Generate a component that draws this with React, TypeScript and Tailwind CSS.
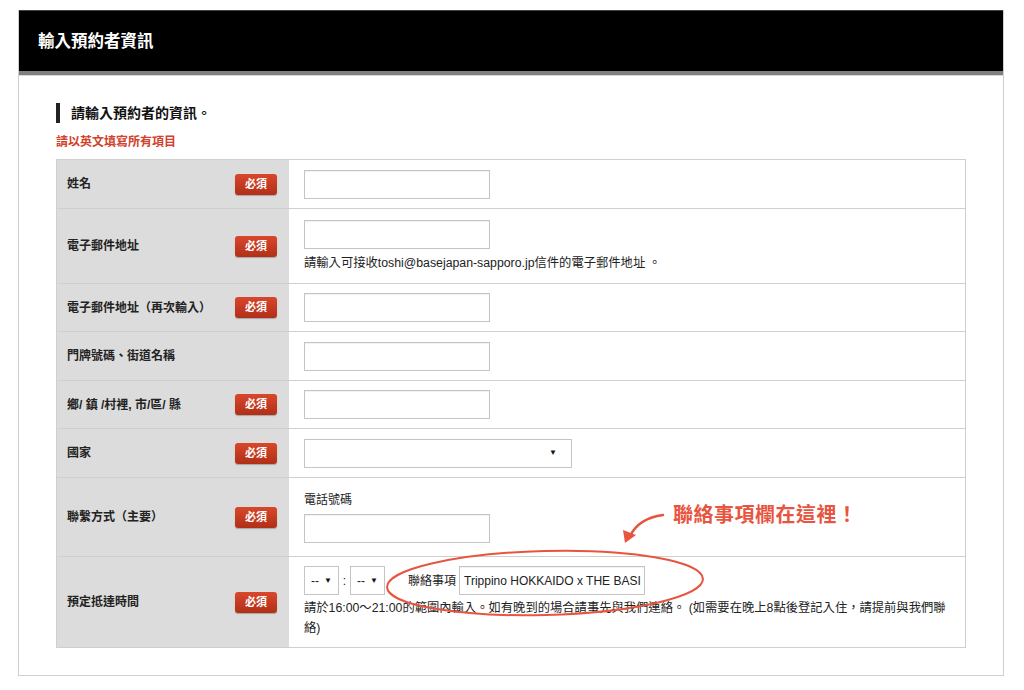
import type { ReactNode } from "react";

const font = { fontFamily: '"Liberation Sans", "Noto Sans CJK TC", sans-serif' };

function Badge() {
    return (
        <span className="flex h-[21px] w-[42px] shrink-0 items-center justify-center rounded-[3px] bg-gradient-to-b from-[#d9472b] to-[#b12f18] text-[11px] font-bold text-white shadow-[0_1px_1px_rgba(0,0,0,0.25)]">
            必須
        </span>
    );
}

function TextBox({ value = "", width = "w-[186px]" }: { value?: string; width?: string }) {
    return (
        <div className={`flex h-[29px] ${width} shrink-0 items-center overflow-hidden whitespace-nowrap border border-[#c4c4c4] bg-white pl-[4px] text-[12px] text-[#222] shadow-[inset_0_1px_1px_rgba(0,0,0,0.06)]`}>
            {value}
        </div>
    );
}

function Caret() {
    return <span className="text-[8px] leading-none text-[#111]">▼</span>;
}

function Row({
    label,
    required = true,
    height,
    children,
}: {
    label: string;
    required?: boolean;
    height: string;
    children: ReactNode;
}) {
    return (
        <div className={`grid grid-cols-[232px_1fr] border-t border-[#cfcfcf] ${height}`}>
            <div className="flex items-center justify-between bg-[#dcdcdc] pl-[10px] pr-[12px]">
                <span className="text-[12px] font-bold text-[#222]">{label}</span>
                {required && <Badge />}
            </div>
            <div className="flex flex-col justify-center pl-[15px] pr-[10px]">{children}</div>
        </div>
    );
}

export default function App() {
    return (
        <div className="relative h-[690px] w-[1024px] overflow-hidden bg-white pt-[10px]" style={font}>
            <div className="ml-[18px] w-[986px] border-x border-b border-[#cfcfcf]">
                <div className="flex h-[61px] items-center border-t border-[#444] bg-black pl-[19px]">
                    <h1 className="text-[16.5px] font-bold text-white">輸入預約者資訊</h1>
                </div>
                <div className="h-[4px] bg-[#808080]" />
                <div className="border-t border-[#d6d6d6] px-[37px] pb-[27px] pt-[27px]">
                    <div className="flex h-[20px] items-center">
                        <span className="mr-[11px] h-[20px] w-[4px] bg-[#222]" />
                        <h2 className="text-[14px] font-bold text-[#111]">請輸入預約者的資訊。</h2>
                    </div>
                    <p className="mt-[11px] text-[12px] font-bold leading-[16px] text-[#d2412b]">請以英文填寫所有項目</p>

                    <div className="mt-[9px] border-x border-b border-[#cfcfcf]">
                        <Row label="姓名" height="h-[49px]">
                            <TextBox />
                        </Row>
                        <Row label="電子郵件地址" height="h-[75px]">
                            <TextBox />
                            <p className="mt-[5px] text-[12.3px] leading-[18px] text-[#222]">
                                請輸入可接收toshi@basejapan-sapporo.jp信件的電子郵件地址 。
                            </p>
                        </Row>
                        <Row label="電子郵件地址（再次輸入）" height="h-[48px]">
                            <TextBox />
                        </Row>
                        <Row label="門牌號碼、街道名稱" required={false} height="h-[49px]">
                            <TextBox />
                        </Row>
                        <Row label="鄉/ 鎮 /村裡, 市/區/ 縣" height="h-[48px]">
                            <TextBox />
                        </Row>
                        <Row label="國家" height="h-[49px]">
                            <div className="flex h-[29px] w-[268px] items-center justify-end border border-[#c4c4c4] bg-white pr-[14px]">
                                <Caret />
                            </div>
                        </Row>
                        <Row label="聯繫方式（主要）" height="h-[79px]">
                            <p className="text-[12px] leading-[16px] text-[#222]">電話號碼</p>
                            <div className="mt-[6px]">
                                <TextBox />
                            </div>
                        </Row>
                        <Row label="預定抵達時間" height="h-[91px]">
                            <div className="flex items-center">
                                <div className="flex h-[29px] w-[35px] items-center justify-between border border-[#c4c4c4] bg-white px-[6px] text-[12px] text-[#222]">
                                    <span>--</span>
                                    <Caret />
                                </div>
                                <span className="w-[11px] text-center text-[12px] text-[#222]">:</span>
                                <div className="flex h-[29px] w-[35px] items-center justify-between border border-[#c4c4c4] bg-white px-[6px] text-[12px] text-[#222]">
                                    <span>--</span>
                                    <Caret />
                                </div>
                                <span className="ml-[23px] mr-[3px] text-[12px] text-[#222]">聯絡事項</span>
                                <TextBox value="Trippino HOKKAIDO x THE BASI" />
                            </div>
                            <p className="mt-[3px] text-[12.3px] leading-[20px] text-[#222]">
                                <span className="block whitespace-nowrap">
                                    請於16:00～21:00的範圍內輸入。如有晚到的場合請事先與我們連絡。 (如需要在晚上8點後登記入住，請提前與我們聯
                                </span>
                                <span className="block">絡)</span>
                            </p>
                        </Row>
                    </div>
                </div>
            </div>

            {/* annotation overlay */}
            <svg className="pointer-events-none absolute left-0 top-0" width="1024" height="690" viewBox="0 0 1024 690">
                <ellipse cx="545" cy="583" rx="158" ry="32" transform="rotate(-1.5 545 583)" fill="none" stroke="#e8553f" strokeWidth="2" />
                <path d="M663 515 C 648 517, 636 524, 630 536" fill="none" stroke="#e8553f" strokeWidth="2.5" strokeLinecap="round" />
                <path d="M625 543 L 623 530 L 636 535 Z" fill="#e8553f" />
            </svg>
            <div className="absolute left-[673px] top-[502px] text-[20px] font-bold leading-[26px] tracking-[0.5px] text-[#e8553f]">
                聯絡事項欄在這裡！
            </div>
        </div>
    );
}
